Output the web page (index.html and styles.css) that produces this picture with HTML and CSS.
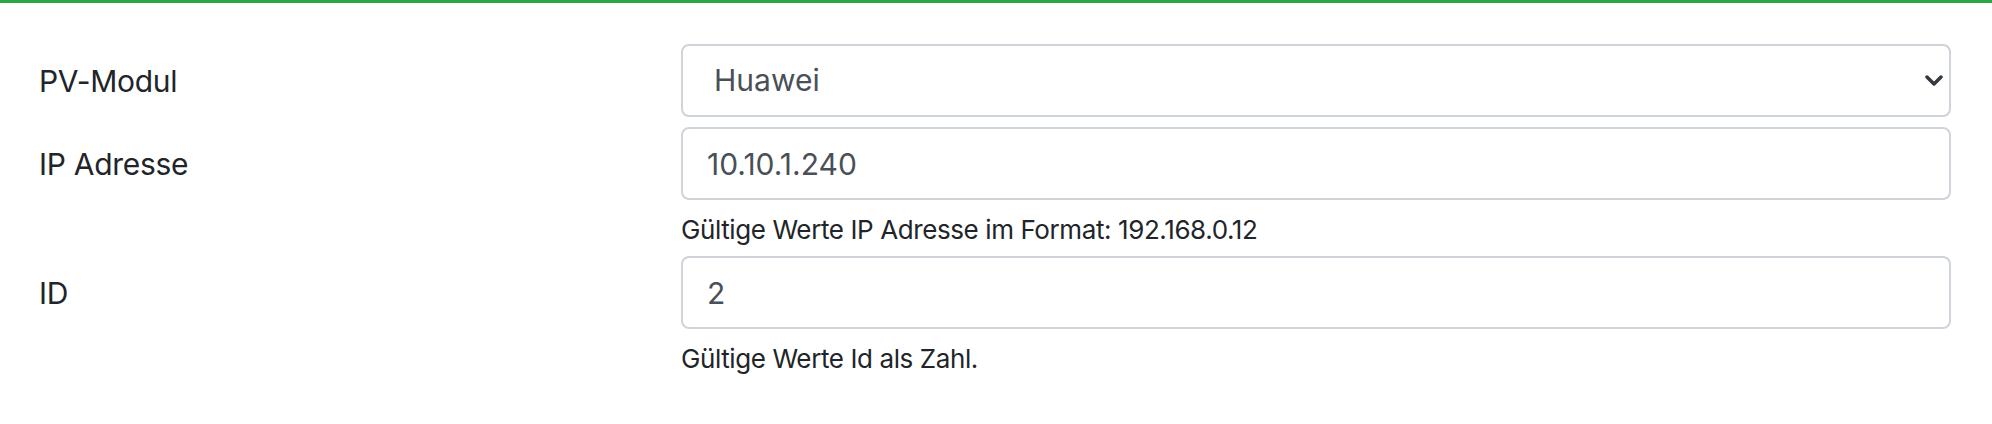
FILE: index.html
```html
<!DOCTYPE html>
<html>
<head>
    <title>PV-Modul Einstellungen</title>
    <link rel="stylesheet" href="styles.css">
</head>
<body>
    <div class="card">
        <form class="card-body">
            <div class="form-row">
                <label for="pvModul" class="form-label">PV-Modul</label>
                <div class="field">
                    <div class="select-wrap">
                        <select id="pvModul" class="form-select">
                            <option selected>Huawei</option>
                            <option>Fronius</option>
                            <option>SMA</option>
                        </select>
                        <svg class="chevron" width="18" height="11" viewBox="0 0 18 11">
                            <path d="M2 2 L9 9 L16 2" fill="none" stroke="#343a40" stroke-width="3.5" stroke-linecap="round" stroke-linejoin="round"/>
                        </svg>
                    </div>
                </div>
            </div>
            <div class="form-row">
                <label for="ipAdresse" class="form-label">IP Adresse</label>
                <div class="field">
                    <input type="text" id="ipAdresse" class="form-control" value="10.10.1.240">
                    <div class="form-text">Gültige Werte IP Adresse im Format: 192.168.0.12</div>
                </div>
            </div>
            <div class="form-row">
                <label for="modulId" class="form-label">ID</label>
                <div class="field">
                    <input type="text" id="modulId" class="form-control" value="2">
                    <div class="form-text">Gültige Werte Id als Zahl.</div>
                </div>
            </div>
        </form>
    </div>
</body>
</html>
```

FILE: styles.css
```css
body {
    font-family: Inter, "Liberation Sans", sans-serif;
    margin: 0;
    background-color: #ffffff;
    color: #212529;
}
.card {
    border-top: 3px solid #28a745;
    height: 421px;
}
.card-body {
    display: flex;
    flex-direction: column;
    gap: 10px;
    padding: 41px 41px 0 39px;
}
/* label column and field column */
.form-row {
    display: grid;
    grid-template-columns: 1fr 2fr;
    column-gap: 7px;
}
.form-label {
    font-size: 30px;
    line-height: 45px;
    padding-top: 15px;
    letter-spacing: -0.3px;
}
.form-control,
.form-select {
    display: block;
    width: 100%;
    box-sizing: border-box;
    height: 73px;
    padding: 12px 24px;
    font-family: inherit;
    font-size: 30px;
    line-height: 45px;
    color: #495057;
    background-color: #ffffff;
    border: 2px solid #ced4da;
    border-radius: 8px;
    outline: none;
}
.form-select {
    appearance: none;
    padding-left: 31px;
}
.select-wrap {
    position: relative;
}
/* arrow drawn over the select */
.chevron {
    position: absolute;
    right: 8px;
    top: 31px;
}
.form-text {
    margin-top: 14px;
    font-size: 26px;
    line-height: 32px;
    letter-spacing: -0.4px;
    color: #212529;
}
```
